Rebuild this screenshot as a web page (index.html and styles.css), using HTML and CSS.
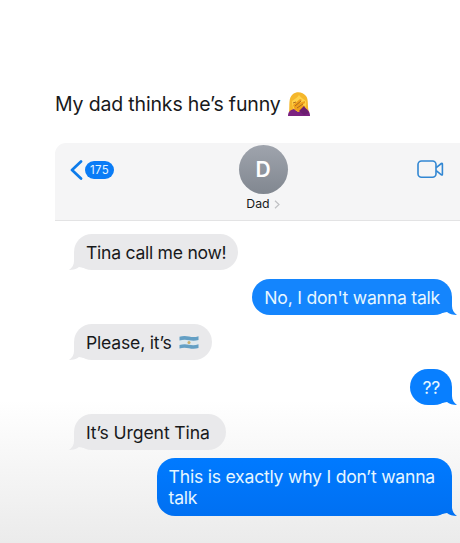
FILE: index.html
```html
<!DOCTYPE html>
<html lang="en">
  <head>
    <meta charset="utf-8">
    <title>My dad thinks he’s funny</title>
    <link rel="stylesheet" href="styles.css">
  </head>
  <body>
    <h1 class="caption">
      <span>My dad thinks he’s funny</span>
      <svg class="facepalm" viewBox="0 0 24 24">
        <path d="M2 20C3 13 1 6 6 2C10 -1 16 0 19 4C22 8 20 14 22 20Z" fill="#f5b72b"/>
        <path d="M5 9C8 7 11 5 12 3C14 6 17 7 19 9C20 15 17 20 12 20C7 20 5 15 5 9Z" fill="#ffd24a"/>
        <path d="M1 24C1 20 3 18 7 17L11 20L17 16C21 17 23 20 23 24Z" fill="#7b2180"/>
        <path d="M6 13L13 7L15 8L12 11L18 9V11L15 13L18 14L16 18L12 20L8 18Z" fill="#efa01d"/>
        <path d="M6 11L9 10M8 14L14 9M10 16L16 12" fill="none" stroke="#a7631b" stroke-width=".9"/>
        <path d="M12 19L17 14L22 21L17 23Z" fill="#6b1d70"/>
      </svg>
    </h1>

    <main class="chat">
      <header>
        <div class="back">
          <svg width="13" height="20" viewBox="0 0 13 20"><path d="M11 1.5L2 10L11 18.5" fill="none" stroke="#0d7bea" stroke-width="2.7" stroke-linecap="round" stroke-linejoin="round"/></svg>
          <span class="count">175</span>
        </div>
        <div class="contact">
          <div class="avatar">D</div>
          <div class="name">Dad <svg width="6" height="9" viewBox="0 0 6 9"><path d="M1 .7L5 4.5L1 8.3" fill="none" stroke="#bfc0c3" stroke-width="1.2"/></svg></div>
        </div>
        <svg class="video" width="27" height="19" viewBox="0 0 27 19">
          <rect x="1" y="1" width="18" height="16.3" rx="3.5"/>
          <path d="M19.2 7.6L24.4 3.5Q25.4 3 25.4 4.2V14.2Q25.4 15.4 24.4 14.8L19.2 10.7"/>
        </svg>
      </header>

      <div class="messages">
        <div class="bubble received">Tina call me now!</div>
        <div class="bubble sent">No, I don't wanna talk</div>
        <div class="bubble received flagged">Please, it’s
          <svg class="flag" width="20" height="15" viewBox="0 0 20 15">
            <path d="M.5 1.8Q5 .2 10 1.5T19.5 1.2V13Q15 14.5 10 13.3T.5 13.5Z" fill="#dfe9ee"/>
            <path d="M.5 1.8Q5 .2 10 1.5T19.5 1.2V5Q15 6.2 10 5.2T.5 5.5ZM.5 10Q5 8.6 10 9.7T19.5 9.3V13Q15 14.5 10 13.3T.5 13.5Z" fill="#649fc4"/>
            <circle cx="10" cy="7.5" r="1.5" fill="#c9ae69"/>
          </svg>
        </div>
        <div class="bubble sent second">??</div>
        <div class="bubble received urgent">It’s Urgent Tina</div>
        <div class="bubble sent last">This is exactly why I don’t wanna<br>talk</div>
      </div>
    </main>
  </body>
</html>
```
FILE: styles.css
```css
* {
    box-sizing: border-box;
}
body {
    margin: 0;
    padding: 92px 0 0 55px;
    height: 543px;
    overflow: hidden;
    font-family: Inter, "Liberation Sans", sans-serif;
    color: #18191b;
    background: linear-gradient(#fff 0, #fff 400px, #ebebeb 543px);
}
svg {
    flex: none;
}
.caption {
    display: flex;
    align-items: center;
    gap: 6px;
    height: 24px;
    margin: 0 0 27px;
    font-size: 19.5px;
    font-weight: 400;
    letter-spacing: -.16px;
    white-space: nowrap;
}
.facepalm {
    width: 24px;
    height: 24px;
}
header {
    display: grid;
    grid-template-columns: 168px 50px 1fr;
    height: 78px;
    padding: 2px 16px 0 15px;
    background: #f5f5f6;
    border-bottom: 1px solid #e3e3e4;
    border-top-left-radius: 11px;
}
.back {
    display: flex;
    align-items: center;
    gap: 2px;
    height: 49px;
}
.count {
    width: 29px;
    height: 18px;
    border-radius: 9px;
    background: #0a7cf6;
    color: #e4f4ff;
    font-size: 11.5px;
    line-height: 18px;
    text-align: center;
    letter-spacing: .3px;
}
.contact {
    display: flex;
    flex-direction: column;
    align-items: center;
}
.avatar {
    width: 49px;
    height: 49px;
    border-radius: 50%;
    background: linear-gradient(#9fa4ad, #818790);
    color: #fff;
    font-size: 21px;
    font-weight: 600;
    line-height: 50px;
    text-align: center;
}
.name {
    display: flex;
    align-items: center;
    gap: 4px;
    margin-top: 2px;
    font-size: 12.3px;
    line-height: 16px;
}
.video {
    justify-self: end;
    margin-top: 15px;
    fill: none;
    stroke: #3287d3;
    stroke-width: 1.6;
    stroke-linejoin: round;
}
.messages {
    display: flex;
    flex-direction: column;
    align-items: flex-start;
    gap: 9px;
    padding: 13px 8px 0 19px;
}
.bubble {
    position: relative;
    display: flex;
    align-items: center;
    gap: 7px;
    height: 36px;
    padding: 0 12px;
    border-radius: 18px;
    font-size: 17.6px;
    line-height: 21px;
    letter-spacing: -.28px;
    white-space: nowrap;
}
.received {
    background: #e9e9eb;
}
.flagged {
    padding-right: 13px;
    letter-spacing: -.2px;
}
.urgent {
    padding-right: 16px;
    letter-spacing: -.12px;
}
.sent {
    align-self: flex-end;
    background: #1485fd;
    color: #e6f6ff;
    letter-spacing: -.23px;
}
.second {
    background: #087fff;
}
.last {
    height: 58px;
    margin-top: -1px;
    padding-right: 17px;
    background: linear-gradient(#007aff, #0070f2);
}
/* little tails in the bottom corners */
.bubble::after {
    content: "";
    position: absolute;
    bottom: 0;
    width: 15px;
    height: 18px;
    background: inherit;
}
.received::after {
    left: -5px;
    clip-path: path("M5 0V9C5 13 3 16 0 18C4 18 8 17 10 15L15 16V0Z");
}
.sent::after {
    right: -5px;
    clip-path: path("M10 0V9C10 13 12 16 15 18C11 18 7 17 5 15L0 16V0Z");
}
.last::after {
    background: linear-gradient(#0073f6, #0070f2);
}
```
